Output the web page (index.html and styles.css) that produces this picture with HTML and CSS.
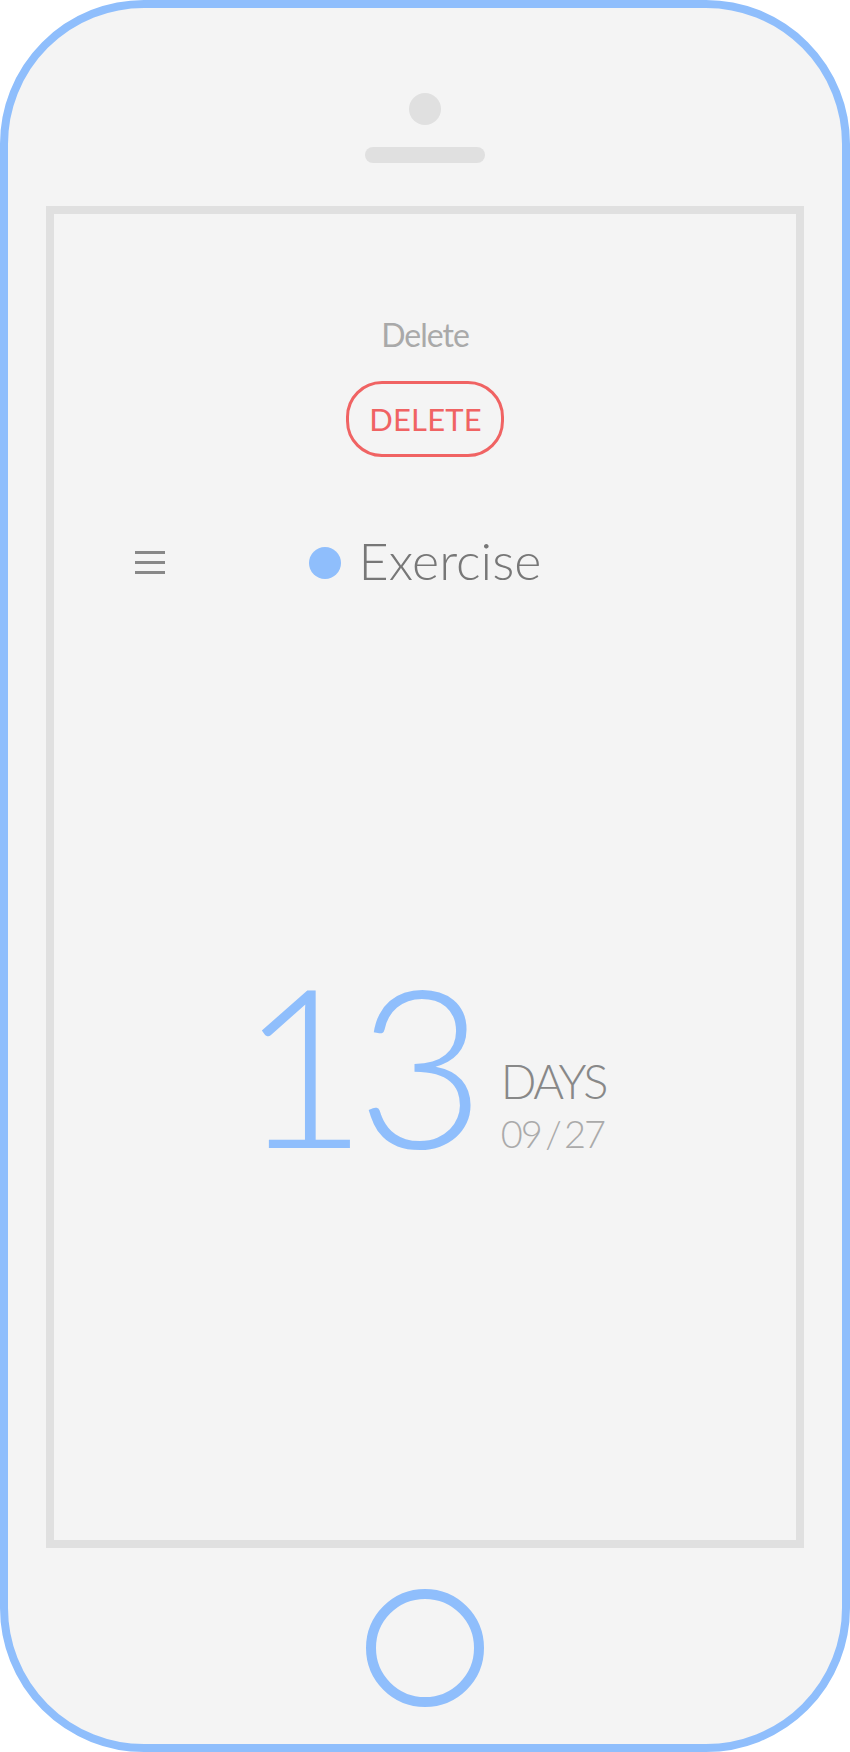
FILE: index.html
```html
<!DOCTYPE html>
<html>
<head>
<meta charset="utf-8">
<link rel="stylesheet" href="styles.css">
</head>
<body>
<div class="phone">
  <div class="camera"></div>
  <div class="speaker"></div>
  <div class="screen">
    <div class="label">Delete</div>
    <button class="delete-btn">DELETE</button>
    <div class="header">
      <div class="menu"><span></span><span></span><span></span></div>
      <div class="title"><span class="dot"></span><span class="title-text">Exercise</span></div>
      <div></div>
    </div>
    <div class="counter">
      <div class="count">13</div>
      <div class="meta">
        <div class="days">DAYS</div>
        <div class="date">09 / 27</div>
      </div>
    </div>
  </div>
  <div class="home"></div>
</div>
</body>
</html>
```
FILE: styles.css
```css
html, body {
  margin: 0;
  padding: 0;
  background: #ffffff;
}
body {
  font-family: Lato, "Noto Sans", sans-serif;
}
.phone {
  box-sizing: border-box;
  width: 850px;
  height: 1752px;
  border: 8px solid #8fbefc;
  border-radius: 144px;
  background: #f4f4f4;
  display: flex;
  flex-direction: column;
  align-items: center;
  padding-top: 85px;
}
.camera {
  width: 32px;
  height: 32px;
  border-radius: 50%;
  background: #e0e0e0;
}
.speaker {
  margin-top: 22px;
  width: 120px;
  height: 16px;
  border-radius: 8px;
  background: #e0e0e0;
}
.screen {
  box-sizing: border-box;
  margin-top: 43px;
  width: 758px;
  height: 1342px;
  border: 8px solid #e0e0e0;
  display: flex;
  flex-direction: column;
  align-items: center;
  padding-top: 105px;
}
.label {
  font-size: 32px;
  line-height: 32px;
  color: #a9a9a9;
  letter-spacing: -1px;
}
.delete-btn {
  box-sizing: border-box;
  margin-top: 30px;
  width: 158px;
  height: 76px;
  border: 3px solid #f06363;
  border-radius: 36px;
  background: transparent;
  color: #f06363;
  font-family: Lato, "Noto Sans", sans-serif;
  font-size: 31px;
  font-weight: 400;
  line-height: 1;
  padding: 0 0 0 1px;
  letter-spacing: 0.2px;
}
.header {
  align-self: stretch;
  display: grid;
  grid-template-columns: 1fr auto 1fr;
  align-items: center;
  margin-top: 78px;
  height: 50px;
}
.menu {
  display: flex;
  flex-direction: column;
  gap: 7px;
  padding-left: 81px;
}
.menu span {
  display: block;
  width: 30px;
  height: 3px;
  background: #888888;
}
.title {
  display: flex;
  align-items: center;
  gap: 18px;
}
.dot {
  width: 32px;
  height: 32px;
  border-radius: 50%;
  background: #8fbefc;
}
.title-text {
  font-size: 52px;
  line-height: 50px;
  font-weight: 300;
  color: #777777;
  padding-bottom: 5px;
}
.counter {
  margin-top: 366px;
  display: flex;
  align-items: flex-end;
  gap: 27px;
  padding-right: 5px;
}
.count {
  font-size: 222px;
  line-height: 1;
  font-weight: 300;
  color: #8fbefc;
  letter-spacing: -11.5px;
}
.meta {
  display: flex;
  flex-direction: column;
  padding-bottom: 21px;
}
.days {
  font-size: 47px;
  line-height: 1;
  font-weight: 300;
  color: #888888;
  letter-spacing: -2.5px;
}
.date {
  font-size: 38px;
  line-height: 1;
  font-weight: 300;
  color: #aaaaaa;
  margin-top: 9px;
  letter-spacing: -2px;
  word-spacing: -4px;
}
.home {
  box-sizing: border-box;
  margin-top: 41px;
  width: 118px;
  height: 118px;
  border: 10px solid #8fbefc;
  border-radius: 50%;
}
```
